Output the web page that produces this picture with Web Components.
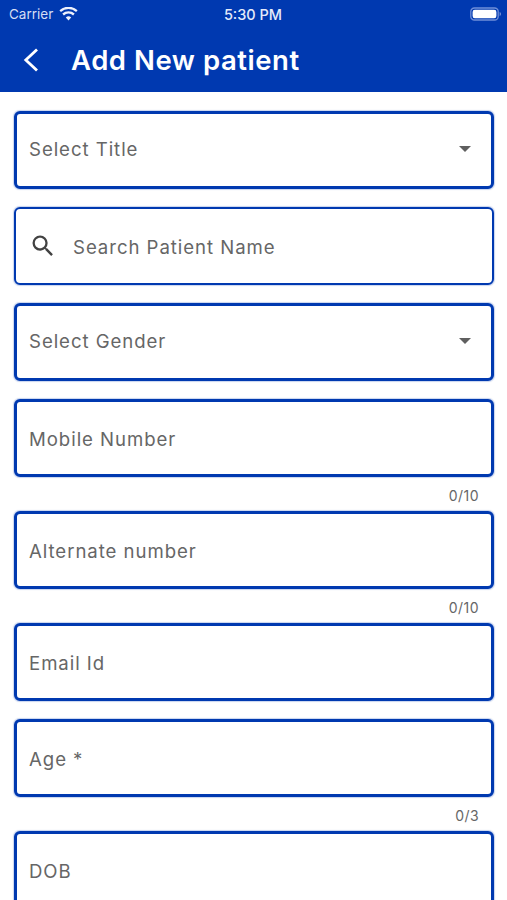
<!DOCTYPE html>
<html><head><meta charset="utf-8">
<style>
html,body{margin:0;padding:0;background:#fff;height:900px;overflow:hidden;font-family:Inter,sans-serif}
</style></head><body>
<app-bar title="Add New patient"></app-bar>
<form-list>
<form-field label="Select Title" kind="select" strong></form-field>
<form-field label="Search Patient Name" kind="search"></form-field>
<form-field label="Select Gender" kind="select" strong></form-field>
<form-field label="Mobile Number" counter="0/10" strong></form-field>
<form-field label="Alternate number" counter="0/10" strong></form-field>
<form-field label="Email Id" strong></form-field>
<form-field label="Age *" counter="0/3" strong></form-field>
<form-field label="DOB" strong></form-field>
</form-list>
<script>
class AppBar extends HTMLElement{
 constructor(){super();const s=this.attachShadow({mode:'open'});
 s.innerHTML=`<style>
 :host{display:block;background:#0039b0;color:#fff;height:92px;box-sizing:border-box}
 .status{height:28px;display:grid;grid-template-columns:1fr auto 1fr;align-items:center;padding:0 5px 0 9px;font:14px "Inter","Liberation Sans",sans-serif}
 .left{display:flex;align-items:center;gap:6px;color:#d5def3;font-size:13.5px}
 .time{font-size:14.5px;font-weight:500;color:#e4eafa;margin-right:5px}
 .right{display:flex;justify-content:flex-end}
 .nav{height:64px;display:flex;align-items:center;padding-left:23px;box-sizing:border-box;padding-bottom:1px}
 h1{margin:0 0 0 32px;font:600 27.5px "Inter","Liberation Sans",sans-serif;letter-spacing:.55px;white-space:nowrap}
 svg{display:block}
 </style>
 <div class="status"><div class="left"><span>Carrier</span>
 <svg width="19" height="14" viewBox="0 0 19 14"><path d="M9.5 13.6l-2.7-3.1a4 4 0 0 1 5.4 0zM4.9 8.4L3.3 6.6a9.2 9.2 0 0 1 12.4 0l-1.6 1.8a6.8 6.8 0 0 0-9.2 0zM1.9 5L.4 3.2a13.6 13.6 0 0 1 18.2 0L17.1 5a11.3 11.3 0 0 0-15.2 0z" fill="#eef2fc"/></svg></div>
 <div class="time">5:30 PM</div>
 <div class="right"><svg width="32" height="14" viewBox="0 0 32 14"><rect x=".8" y="1" width="27.4" height="12" rx="3.6" fill="none" stroke="#6f8ed8" stroke-width="1.3"/><rect x="2.6" y="2.8" width="23.8" height="8.4" rx="2.2" fill="#fff"/><path d="M29.6 5v4c.9-.3 1.4-1.1 1.4-2s-.5-1.7-1.4-2z" fill="#6f8ed8"/></svg></div></div>
 <div class="nav"><svg width="16" height="24" viewBox="0 0 16 24"><path d="M14 1.5L2.8 12 14 22.5" fill="none" stroke="#fff" stroke-width="2.8"/></svg><h1>${this.getAttribute('title')}</h1></div>`;
 }}
class FormList extends HTMLElement{
 constructor(){super();const s=this.attachShadow({mode:'open'});
 s.innerHTML=`<style>:host{display:flex;flex-direction:column;padding:19px 13px 0 14px}</style><slot></slot>`;
 }}
class FormField extends HTMLElement{
 constructor(){super();const s=this.attachShadow({mode:'open'});
 const kind=this.getAttribute('kind'),c=this.getAttribute('counter'),strong=this.hasAttribute('strong');
 const search=kind==='search'?`<svg class="search" width="24" height="24" viewBox="0 0 24 24"><path d="M15.5 14h-.79l-.28-.27A6.47 6.47 0 0 0 16 9.5 6.5 6.5 0 1 0 9.5 16c1.61 0 3.09-.59 4.23-1.57l.27.28v.79l5 4.99L20.49 19zm-6 0C7.01 14 5 11.99 5 9.5S7.01 5 9.5 5 14 7.01 14 9.5 11.99 14 9.5 14z" fill="#424242"/></svg>`:'';
 const arrow=kind==='select'?`<svg class="arrow" width="12" height="6" viewBox="0 0 12 6"><path d="M0 0h12L6 6z" fill="#5f5f5f"/></svg>`:'';
 const pad=kind==='select'?'0 20px 2px 12px':kind==='search'?'3px 24px 0 13px':'2px 20px 0 12px';
 s.innerHTML=`<style>
 :host{display:block;margin-bottom:18.5px}
 :host([counter]){margin-bottom:0}
 .box{height:77.5px;box-sizing:border-box;border:${strong?3:2}px solid #0039b0;border-radius:6px;background:#fff;box-shadow:0 0 1px .5px rgba(0,57,176,.22);display:flex;align-items:center;padding:${pad}}
 .label{flex:1;font:18.6px Inter,sans-serif;letter-spacing:.95px;color:#666;white-space:nowrap}
 .search{flex:none;margin:-3px 16px 0 0;width:28px;height:28px}
 .count{height:34.5px;box-sizing:border-box;display:flex;justify-content:flex-end;padding:11px 15px 0 0;font:14px Inter,sans-serif;letter-spacing:.45px;color:#666;line-height:16px}
 </style><div class="box">${search}<span class="label">${this.getAttribute('label')}</span>${arrow}</div>${c?`<div class="count">${c}</div>`:''}`;
 }}
customElements.define('app-bar',AppBar);
customElements.define('form-list',FormList);
customElements.define('form-field',FormField);
</script>
</body></html>
